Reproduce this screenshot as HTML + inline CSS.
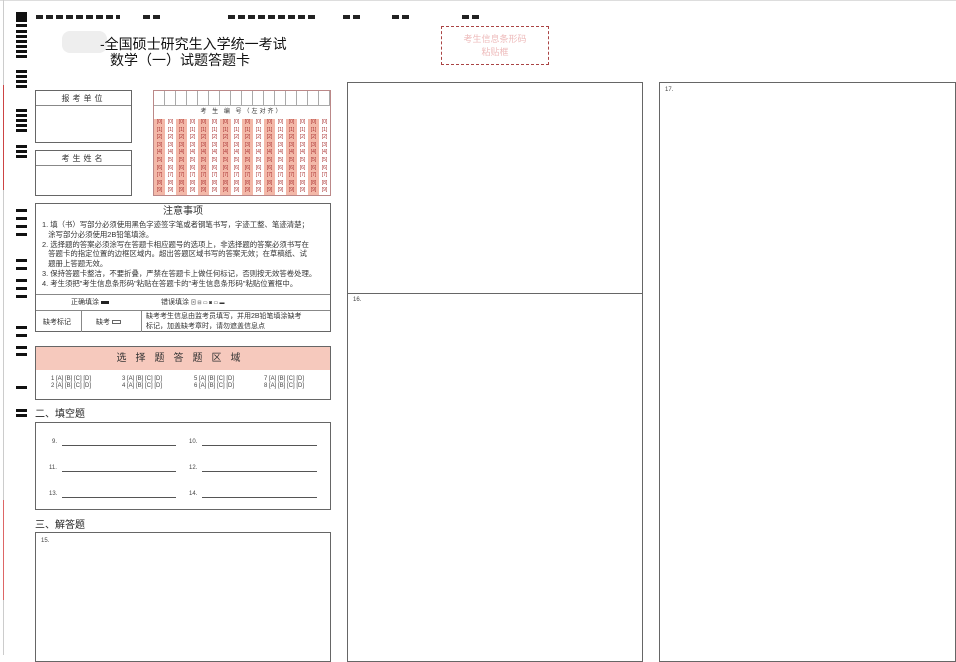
<!DOCTYPE html>
<html><head><meta charset="utf-8"><style>
*{margin:0;padding:0;box-sizing:border-box}
body{width:956px;height:655px;background:#fff;position:relative;overflow:hidden;font-family:"Liberation Sans","Noto Sans CJK SC",sans-serif;color:#333}
.a{position:absolute}
.bar{position:absolute;left:16px;width:11px;height:3px;background:#111}
.tb{position:absolute;top:15px;height:4px;background:#222}
.box{position:absolute;border:1px solid #666;background:#fff}
.row{display:flex;height:7.6px;background:repeating-linear-gradient(90deg,#f3b8a8 0 11px,#fff 11px 22px)}
.row span{width:11px;font-size:5px;line-height:7.6px;color:#a33;text-align:center;white-space:nowrap;overflow:hidden}
.fl{position:absolute;font-size:6px;color:#444}
.ln{position:absolute;height:1px;background:#555}
</style></head><body>
<div class="a" style="left:0;top:0;width:956px;height:1px;background:#ddd"></div>
<div class="a" style="left:3px;top:0;width:1px;height:655px;background:#ccc"></div>
<div class="a" style="left:3px;top:85px;width:1px;height:105px;background:#c44"></div>
<div class="a" style="left:3px;top:500px;width:1px;height:100px;background:#d66"></div>
<div class="a" style="left:16px;top:12px;width:11px;height:10px;background:#111"></div>
<div class="bar" style="top:24px"></div><div class="bar" style="top:30px"></div><div class="bar" style="top:35px"></div><div class="bar" style="top:40px"></div><div class="bar" style="top:45px"></div><div class="bar" style="top:50px"></div><div class="bar" style="top:55px"></div>
<div class="bar" style="top:70px"></div><div class="bar" style="top:75px"></div><div class="bar" style="top:80px"></div><div class="bar" style="top:85px"></div>
<div class="bar" style="top:109px"></div><div class="bar" style="top:114px"></div><div class="bar" style="top:119px"></div><div class="bar" style="top:124px"></div><div class="bar" style="top:129px"></div>
<div class="bar" style="top:145px"></div><div class="bar" style="top:150px"></div><div class="bar" style="top:155px"></div>
<div class="bar" style="top:209px"></div><div class="bar" style="top:217px"></div><div class="bar" style="top:225px"></div><div class="bar" style="top:233px"></div>
<div class="bar" style="top:259px"></div><div class="bar" style="top:267px"></div>
<div class="bar" style="top:279px"></div><div class="bar" style="top:287px"></div><div class="bar" style="top:295px"></div>
<div class="bar" style="top:326px"></div><div class="bar" style="top:334px"></div>
<div class="bar" style="top:346px"></div><div class="bar" style="top:353px"></div>
<div class="bar" style="top:386px"></div>
<div class="bar" style="top:409px"></div><div class="bar" style="top:414px"></div>
<div class="tb" style="left:36px;width:84px;background:repeating-linear-gradient(90deg,#222 0 7px,transparent 7px 10px)"></div>
<div class="tb" style="left:143px;width:18px;background:repeating-linear-gradient(90deg,#222 0 7px,transparent 7px 10px)"></div>
<div class="tb" style="left:228px;width:90px;background:repeating-linear-gradient(90deg,#222 0 7px,transparent 7px 10px)"></div>
<div class="tb" style="left:343px;width:18px;background:repeating-linear-gradient(90deg,#222 0 7px,transparent 7px 10px)"></div>
<div class="tb" style="left:392px;width:18px;background:repeating-linear-gradient(90deg,#222 0 7px,transparent 7px 10px)"></div>
<div class="tb" style="left:462px;width:18px;background:repeating-linear-gradient(90deg,#222 0 7px,transparent 7px 10px)"></div>
<div class="a" style="left:62px;top:31px;width:45px;height:22px;background:#eee;border-radius:8px"></div>
<div class="a" style="left:100px;top:34px;font-size:14px;color:#111">-全国硕士研究生入学统一考试</div>
<div class="a" style="left:110px;top:50px;font-size:14px;color:#111">数学（一）试题答题卡</div>
<div class="a" style="left:441px;top:26px;width:108px;height:39px;border:1px dashed #a44;text-align:center;font-size:9px;color:#ebb;padding-top:6px;line-height:13px">考生信息条形码<br>粘贴框</div>
<div class="box" style="left:35px;top:90px;width:97px;height:53px"><div style="border-bottom:1px solid #888;height:15px;text-align:center;font-size:8px;line-height:15px;letter-spacing:3px">报考单位</div></div>
<div class="box" style="left:35px;top:150px;width:97px;height:46px"><div style="border-bottom:1px solid #888;height:15px;text-align:center;font-size:8px;line-height:15px;letter-spacing:3px">考生姓名</div></div>
<div class="box" style="left:153px;top:90px;width:178px;height:106px;border-color:#b88">
<div style="height:15px;border-bottom:1px solid #aaa;background:repeating-linear-gradient(90deg,#fff 0 10px,#aaa 10px 11px)"></div>
<div style="height:13px;text-align:center;font-size:6px;line-height:13px;letter-spacing:2px">考 生 编 号（左对齐）</div>
<div class="row"><span>[0]</span><span>[0]</span><span>[0]</span><span>[0]</span><span>[0]</span><span>[0]</span><span>[0]</span><span>[0]</span><span>[0]</span><span>[0]</span><span>[0]</span><span>[0]</span><span>[0]</span><span>[0]</span><span>[0]</span><span>[0]</span></div>
<div class="row"><span>[1]</span><span>[1]</span><span>[1]</span><span>[1]</span><span>[1]</span><span>[1]</span><span>[1]</span><span>[1]</span><span>[1]</span><span>[1]</span><span>[1]</span><span>[1]</span><span>[1]</span><span>[1]</span><span>[1]</span><span>[1]</span></div>
<div class="row"><span>[2]</span><span>[2]</span><span>[2]</span><span>[2]</span><span>[2]</span><span>[2]</span><span>[2]</span><span>[2]</span><span>[2]</span><span>[2]</span><span>[2]</span><span>[2]</span><span>[2]</span><span>[2]</span><span>[2]</span><span>[2]</span></div>
<div class="row"><span>[3]</span><span>[3]</span><span>[3]</span><span>[3]</span><span>[3]</span><span>[3]</span><span>[3]</span><span>[3]</span><span>[3]</span><span>[3]</span><span>[3]</span><span>[3]</span><span>[3]</span><span>[3]</span><span>[3]</span><span>[3]</span></div>
<div class="row"><span>[4]</span><span>[4]</span><span>[4]</span><span>[4]</span><span>[4]</span><span>[4]</span><span>[4]</span><span>[4]</span><span>[4]</span><span>[4]</span><span>[4]</span><span>[4]</span><span>[4]</span><span>[4]</span><span>[4]</span><span>[4]</span></div>
<div class="row"><span>[5]</span><span>[5]</span><span>[5]</span><span>[5]</span><span>[5]</span><span>[5]</span><span>[5]</span><span>[5]</span><span>[5]</span><span>[5]</span><span>[5]</span><span>[5]</span><span>[5]</span><span>[5]</span><span>[5]</span><span>[5]</span></div>
<div class="row"><span>[6]</span><span>[6]</span><span>[6]</span><span>[6]</span><span>[6]</span><span>[6]</span><span>[6]</span><span>[6]</span><span>[6]</span><span>[6]</span><span>[6]</span><span>[6]</span><span>[6]</span><span>[6]</span><span>[6]</span><span>[6]</span></div>
<div class="row"><span>[7]</span><span>[7]</span><span>[7]</span><span>[7]</span><span>[7]</span><span>[7]</span><span>[7]</span><span>[7]</span><span>[7]</span><span>[7]</span><span>[7]</span><span>[7]</span><span>[7]</span><span>[7]</span><span>[7]</span><span>[7]</span></div>
<div class="row"><span>[8]</span><span>[8]</span><span>[8]</span><span>[8]</span><span>[8]</span><span>[8]</span><span>[8]</span><span>[8]</span><span>[8]</span><span>[8]</span><span>[8]</span><span>[8]</span><span>[8]</span><span>[8]</span><span>[8]</span><span>[8]</span></div>
<div class="row"><span>[9]</span><span>[9]</span><span>[9]</span><span>[9]</span><span>[9]</span><span>[9]</span><span>[9]</span><span>[9]</span><span>[9]</span><span>[9]</span><span>[9]</span><span>[9]</span><span>[9]</span><span>[9]</span><span>[9]</span><span>[9]</span></div>
</div>
<div class="box" style="left:35px;top:203px;width:296px;height:129px">
<div style="text-align:center;font-size:10px;height:16px;line-height:16px">注意事项</div>
<div style="font-size:7.4px;line-height:9.8px;padding:0 6px;color:#333;white-space:nowrap">
1. 填（书）写部分必须使用黑色字迹签字笔或者钢笔书写，字迹工整、笔迹清楚；<br>&nbsp;&nbsp;&nbsp;涂写部分必须使用2B铅笔填涂。<br>
2. 选择题的答案必须涂写在答题卡相应题号的选项上，非选择题的答案必须书写在<br>&nbsp;&nbsp;&nbsp;答题卡的指定位置的边框区域内。超出答题区域书写的答案无效；在草稿纸、试<br>&nbsp;&nbsp;&nbsp;题册上答题无效。<br>
3. 保持答题卡整洁，不要折叠，严禁在答题卡上做任何标记，否则按无效答卷处理。<br>
4. 考生须把"考生信息条形码"粘贴在答题卡的"考生信息条形码"粘贴位置框中。</div>
<div class="a" style="left:0;top:90px;width:294px;height:1px;background:#888"></div>
<div class="a" style="left:35px;top:93px;font-size:7px">正确填涂 <span style="display:inline-block;width:8px;height:3px;background:#222;vertical-align:middle"></span></div>
<div class="a" style="left:125px;top:93px;font-size:7px">错误填涂 <span style="font-size:5px">⊠ ⊟ ▭ ◙ ▭ ▬</span></div>
<div class="a" style="left:0;top:106px;width:294px;height:1px;background:#888"></div>
<div class="a" style="left:45px;top:106px;width:1px;height:22px;background:#888"></div>
<div class="a" style="left:105px;top:106px;width:1px;height:22px;background:#888"></div>
<div class="a" style="left:7px;top:113px;font-size:7px">缺考标记</div>
<div class="a" style="left:60px;top:113px;font-size:7px">缺考 <span style="display:inline-block;width:9px;height:4px;border:1px solid #666;vertical-align:middle"></span></div>
<div class="a" style="left:110px;top:108px;font-size:7px;line-height:10px">缺考考生信息由监考员填写，并用2B铅笔填涂缺考<br>标记，加盖缺考章时，请勿遮盖信息点</div>
</div>
<div class="box" style="left:35px;top:346px;width:296px;height:54px">
<div style="background:#f6c9bd;height:23px;text-align:center;font-size:10px;line-height:23px;letter-spacing:9px;color:#333">选择题答题区域</div>
<div class="fl" style="left:15px;top:29px;line-height:7px">1 [A] [B] [C] [D]<br>2 [A] [B] [C] [D]</div>
<div class="fl" style="left:86px;top:29px;line-height:7px">3 [A] [B] [C] [D]<br>4 [A] [B] [C] [D]</div>
<div class="fl" style="left:158px;top:29px;line-height:7px">5 [A] [B] [C] [D]<br>6 [A] [B] [C] [D]</div>
<div class="fl" style="left:228px;top:29px;line-height:7px">7 [A] [B] [C] [D]<br>8 [A] [B] [C] [D]</div>
</div>
<div class="a" style="left:35px;top:405px;font-size:10px;color:#222">二、填空题</div>
<div class="box" style="left:35px;top:422px;width:296px;height:88px">
<div class="fl" style="left:16px;top:16px">9.</div><div class="ln" style="left:26px;top:22px;width:114px"></div>
<div class="fl" style="left:153px;top:16px">10.</div><div class="ln" style="left:166px;top:22px;width:115px"></div>
<div class="fl" style="left:13px;top:42px">11.</div><div class="ln" style="left:26px;top:48px;width:114px"></div>
<div class="fl" style="left:153px;top:42px">12.</div><div class="ln" style="left:166px;top:48px;width:115px"></div>
<div class="fl" style="left:13px;top:68px">13.</div><div class="ln" style="left:26px;top:74px;width:114px"></div>
<div class="fl" style="left:153px;top:68px">14.</div><div class="ln" style="left:166px;top:74px;width:115px"></div>
</div>
<div class="a" style="left:35px;top:516px;font-size:10px;color:#222">三、解答题</div>
<div class="box" style="left:35px;top:532px;width:296px;height:130px"><div class="fl" style="left:5px;top:5px">15.</div></div>
<div class="box" style="left:347px;top:82px;width:296px;height:580px">
<div class="a" style="left:0;top:210px;width:294px;height:1px;background:#666"></div>
<div class="fl" style="left:5px;top:214px">16.</div></div>
<div class="box" style="left:659px;top:82px;width:297px;height:580px"><div class="fl" style="left:5px;top:4px">17.</div></div>
</body></html>
